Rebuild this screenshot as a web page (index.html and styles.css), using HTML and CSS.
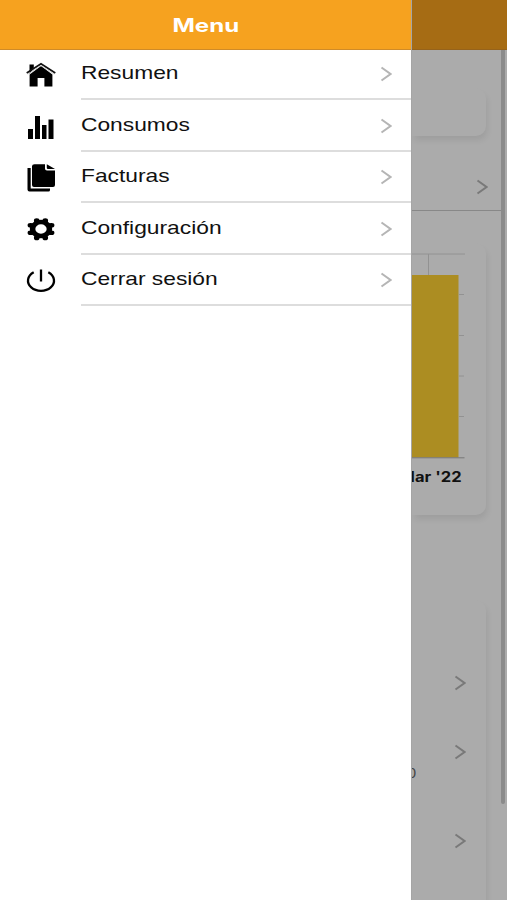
FILE: index.html
```html
<!DOCTYPE html>
<html lang="es">
<head>
<meta charset="utf-8">
<title>Menu</title>
<link rel="stylesheet" href="styles.css">
</head>
<body>
<div class="app">
  <aside class="drawer">
    <header class="bar"><h1 class="title">Menu</h1></header>
    <nav class="menu">
      <a class="item">
        <svg class="icon" viewBox="0 0 30 30"><path d="M3.5 14V4.500h4.300v4zM3.600 14.500 15 6l11.400 8.500v12h-8V18h-6.800v8.500h-8z"/><path d="M.7 13 15 3.700 29.300 13" fill="none" stroke="#111" stroke-width="1.700"/><path d="M1.800 14.200 15 5.600l13.200 8.600" fill="none" stroke="#ccc" stroke-width=".9"/></svg>
        <span class="row"><span class="label">Resumen</span><svg class="chevron" viewBox="0 0 12 16"><path d="M1.5 1.5 10.5 8l-9 6.5"/></svg></span>
      </a>
      <a class="item">
        <svg class="icon" viewBox="0 0 30 30"><path d="M2 17h5v10H2zM9 4h5v23H9zM16 13h4.500v14H16zM22.500 7.500H27.500V27H22.500z"/></svg>
        <span class="row"><span class="label">Consumos</span><svg class="chevron" viewBox="0 0 12 16"><path d="M1.5 1.5 10.5 8l-9 6.500"/></svg></span>
      </a>
      <a class="item">
        <svg class="icon" viewBox="0 0 30 30"><path d="M1.500 5H4.700v20.500H24V27q0 1.500-1.500 1.500H3.500q-2 0-2-2zM8.500 1.200H19v4.500q0 1.800 2 1.800h8V22q0 2-2 2H8q-2 0-2-2V3.200q0-2 2.500-2zM20.800 1.200 29 6h-7q-1.200 0-1.200-1z"/></svg>
        <span class="row"><span class="label">Facturas</span><svg class="chevron" viewBox="0 0 12 16"><path d="M1.5 1.5 10.5 8l-9 6.500"/></svg></span>
      </a>
      <a class="item">
        <svg class="icon" viewBox="0 0 30 30"><g transform="translate(15 14) scale(1.220 1)" fill="none" stroke="#000"><circle r="6.900" stroke-width="4.500"/><path d="M-3.500-8.500v.5M3.500-8.500v.5M-3.500 8.500v.5M3.500 8.500v.5M-8.700-3.700h.5M8.700-3.700h-.5M-8.700 3.700h.5M8.700 3.700h-.5" stroke-width="4.600" stroke-linecap="round"/></g></svg>
        <span class="row"><span class="label">Configuración</span><svg class="chevron" viewBox="0 0 12 16"><path d="M1.5 1.5 10.5 8l-9 6.500"/></svg></span>
      </a>
      <a class="item">
        <svg class="icon" viewBox="0 0 30 30"><path d="M7.700 6.200A13 10.200 0 1 0 22.300 6.200M15 3.500v12" fill="none" stroke="#000" stroke-width="2.300"/></svg>
        <span class="row"><span class="label">Cerrar sesión</span><svg class="chevron" viewBox="0 0 12 16"><path d="M1.5 1.5 10.5 8l-9 6.500"/></svg></span>
      </a>
    </nav>
  </aside>
  <main class="page">
    <div class="bar dim"></div>
    <div class="body">
      <div class="content">
        <section class="card summary"></section>
        <div class="link"><svg class="chevron" viewBox="0 0 12 16"><path d="M1.5 1.5 10.5 8l-9 6.500"/></svg></div>
        <section class="card chart">
          <svg class="plot" viewBox="0 0 54 206"><path d="M0 1h54M17.500 1v22M48 41.500h5M48 82.500h5M48 123h5M48 163.500h5" fill="none" stroke="#929292"/><path d="M0 22h47.500v182.500H0z" fill="#ac8d22"/><path d="M0 204.800h53.500" stroke="#777"/></svg>
          <div class="axis"><span>Mar '22</span></div>
        </section>
        <section class="card list">
          <div class="entry first"><svg class="chevron" viewBox="0 0 12 16"><path d="M1.5 1.5 10.5 8l-9 6.500"/></svg></div>
          <div class="entry"><svg class="chevron" viewBox="0 0 12 16"><path d="M1.5 1.5 10.5 8l-9 6.500"/></svg></div>
          <div class="amount"><span>0</span></div>
          <div class="entry"><svg class="chevron" viewBox="0 0 12 16"><path d="M1.5 1.5 10.5 8l-9 6.500"/></svg></div>
        </section>
      </div>
      <div class="scrollbar"></div>
    </div>
  </main>
</div>
</body>
</html>
```
FILE: styles.css
```css
* { box-sizing: border-box; }
body { margin: 0; font-family: "Liberation Sans", Arial, sans-serif; color: #111; }
svg { display: block; flex: none; }
.app { display: flex; width: 507px; height: 900px; overflow: hidden; }
.drawer { width: 411px; flex: none; background: #fff; }
.bar { display: flex; align-items: center; justify-content: center; height: 50px; background: #f6a21f; border-bottom: 1px solid #cf8b28; }
.bar.dim { background: #a66c14; border-bottom-color: #96631b; }
.title { margin: 0; padding-left: 1px; font: 700 18.5px/24px Inter, sans-serif; color: #fff; transform: scaleX(1.3); }
.item { display: flex; height: 51.5px; padding-left: 26px; }
.item:first-child { height: 50px; }
.icon { width: 30px; height: 30px; align-self: flex-end; margin: 0 25px 10px 0; fill: #000; }
.row { display: flex; flex: 1; align-items: flex-end; justify-content: space-between; padding: 0 19px 14px 0; border-bottom: 2px solid #ddd; }
.label { font-size: 18.6px; line-height: 22px; transform: scaleX(1.225); transform-origin: left; white-space: nowrap; }
.chevron { width: 12px; height: 16px; fill: none; stroke: #b5b5b5; stroke-width: 2; margin-bottom: 2px; }

.page { flex: 1; background: #ababab; border-left: 1px solid #a5a5a5; overflow: hidden; }
.page .bar { margin-left: -1px; }
.body { display: flex; height: 850px; }
.content { display: flex; flex-direction: column; width: 89px; }
.page .chevron { stroke: #797979; margin: 0; }
.card { flex: none; width: 74px; border-radius: 0 10px 10px 0; background: #ababab; box-shadow: 2px 5px 6px -1px rgba(0,0,0,.08); }
.summary { height: 48px; margin-top: 38px; }
.link { display: flex; flex: none; justify-content: flex-end; align-items: center; height: 75px; padding: 27px 13px 0 0; border-bottom: 1px solid #888; }
.chart { height: 272px; margin-top: 32px; padding-top: 10px; }
.plot { width: 54px; height: 206px; margin-left: -1px; }
.axis { display: flex; justify-content: flex-end; width: 50px; overflow: hidden; font: 700 14px/20px Inter, sans-serif; margin-top: 8px; }
.axis span { flex: none; transform: scaleX(1.18); transform-origin: right; }
.list { height: 330px; margin-top: 85px; padding-top: 75px; }
.entry { display: flex; justify-content: flex-end; padding-right: 20px; }
.first { margin-bottom: 52.5px; }
.amount { display: flex; justify-content: flex-end; width: 4px; height: 18px; margin: 4px 0 51.5px; overflow: hidden; font-size: 15px; line-height: 18px; color: #444; }
.scrollbar { width: 4px; height: 754px; background: #8b8b8b; border-radius: 0 0 2px 2px; }
```
